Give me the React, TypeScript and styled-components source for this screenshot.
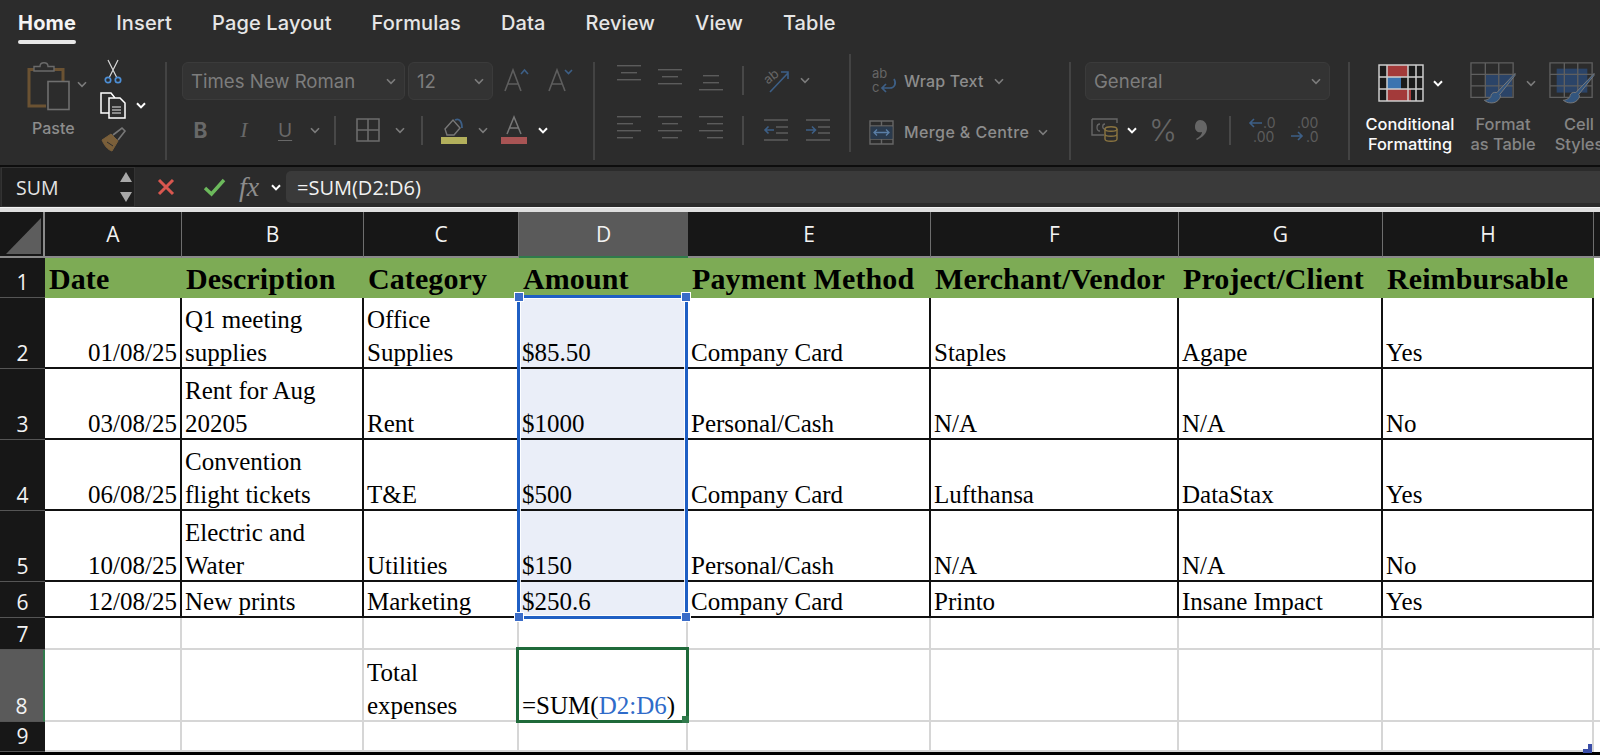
import React from "react";
import styled, { createGlobalStyle } from "styled-components";

const Global = createGlobalStyle`
  html, body { margin: 0; padding: 0; width: 1600px; height: 755px; overflow: hidden; background: #fff; }
  * { box-sizing: border-box; }
  #root { width: 1600px; height: 755px; overflow: hidden; }
`;

const UI = `Inter, "Open Sans", "Liberation Sans", sans-serif`;
const SERIF = `"Liberation Serif", "Times New Roman", serif`;

const Page = styled.div`
  width: 1600px;
  height: 755px;
  display: flex;
  flex-direction: column;
  overflow: hidden;
  background: #fff;
`;
const Chrome = styled.div`
  background: #2c2c2c;
  font-family: ${UI};
  height: 165px;
  flex: none;
`;
const TabBar = styled.div`
  height: 50px;
  display: flex;
  gap: 40px;
  padding: 11px 0 0 18px;
`;
const Tab = styled.div<{ $active?: boolean }>`
  display: flex;
  flex-direction: column;
  color: ${(p) => (p.$active ? "#f4f4f4" : "#e6e6e6")};
  font-size: 20px;
  font-weight: ${(p) => (p.$active ? 700 : 500)};
  line-height: 24px;
  letter-spacing: ${(p) => (p.$active ? 0.2 : 0.15)}px;
  white-space: nowrap;
`;
const TabLine = styled.div<{ $active?: boolean }>`
  height: 4px;
  margin-top: 5px;
  border-radius: 2px;
  background: ${(p) => (p.$active ? "#e8e8e8" : "transparent")};
`;
const Ribbon = styled.div`
  height: 115px;
  display: flex;
`;
const Group = styled.div<{ $w: number; $pad?: number; $shift?: number }>`
  width: ${(p) => p.$w}px;
  flex: none;
  padding-left: ${(p) => p.$pad ?? 0}px;
  display: flex;
  flex-direction: column;
  gap: ${(p) => 10 + (p.$shift ?? 0)}px;
  padding-top: ${(p) => 10 + (p.$shift ?? 0)}px;
`;
const Sep = styled.div<{ $top?: number; $h?: number }>`
  width: 2px;
  flex: none;
  background: #434343;
  margin-top: ${(p) => p.$top ?? 12}px;
  height: ${(p) => p.$h ?? 98}px;
`;
const Row = styled.div`
  height: 40px;
  display: flex;
  align-items: center;
`;
const Drop = styled.div<{ $w: number; $ml?: number }>`
  width: ${(p) => p.$w}px;
  margin-left: ${(p) => p.$ml ?? 0}px;
  height: 38px;
  margin-top: 2px;
  flex: none;
  border: 1px solid #3b3b3b;
  border-radius: 6px;
  background: #333333;
  color: #7d7d7d;
  font-size: 18.6px;
  display: flex;
  align-items: center;
  justify-content: space-between;
  padding: 0 8px 0 8px;
  white-space: nowrap;
`;
const Ico = styled.svg<{ $ml?: number; $mt?: number }>`
  flex: none;
  display: block;
  overflow: visible;
  margin-left: ${(p) => p.$ml ?? 0}px;
  margin-top: ${(p) => p.$mt ?? 0}px;
`;
const Glyph = styled.span<{ $ml: number; $w?: number }>`
  margin-left: ${(p) => p.$ml}px;
  width: ${(p) => p.$w ?? 14}px;
  flex: none;
  text-align: center;
  color: #686868;
  font-size: 21px;
`;
const BoldGlyph = styled(Glyph)`
  font-weight: 700;
`;
const ItalicGlyph = styled(Glyph)`
  font-family: ${SERIF};
  font-style: italic;
  font-size: 22px;
`;
const UnderGlyph = styled(Glyph)`
  font-size: 19px;
  text-decoration: underline;
  text-underline-offset: 3px;
`;
const ActionLabel = styled.span<{ $ml: number; $ls?: number }>`
  margin-left: ${(p) => p.$ml}px;
  color: #8d8d8d;
  font-size: 16px;
  font-weight: 500;
  white-space: nowrap;
  letter-spacing: ${(p) => p.$ls ?? 0.2}px;
`;
const ClipGroup = styled.div`
  width: 165px;
  flex: none;
  display: flex;
`;
const PasteCol = styled.div`
  width: 100px;
  flex: none;
  padding: 12px 0 0 27px;
`;
const PasteTop = styled.div`
  display: flex;
  align-items: center;
`;
const PasteLabel = styled.div`
  color: #8d8d8d;
  font-size: 16px;
  font-weight: 500;
  margin: 6px 0 0 5px;
`;
const SmallCol = styled.div`
  flex: none;
  display: flex;
  flex-direction: column;
  padding-top: 9px;
  gap: 9px;
`;
const SmallRow = styled.div`
  height: 25px;
  display: flex;
  align-items: center;
`;
const StyleBtn = styled.div<{ $w: number }>`
  width: ${(p) => p.$w}px;
  flex: none;
  display: flex;
  flex-direction: column;
  align-items: center;
  padding-top: 14px;
`;
const StyleIcons = styled.div<{ $shift?: number }>`
  height: 38px;
  display: flex;
  align-items: center;
  margin-left: ${(p) => p.$shift ?? 0}px;
`;
const StyleLabel = styled.div<{ $on?: boolean }>`
  margin-top: 13px;
  font-size: 16.4px;
  line-height: 19.5px;
  font-weight: 500;
  text-align: center;
  white-space: nowrap;
  color: ${(p) => (p.$on ? "#fafafa" : "#858585")};
`;
const StyleGroup = styled.div`
  display: flex;
  padding-left: 14px;
`;
const FormulaRow = styled.div`
  height: 42px;
  flex: none;
  display: flex;
  align-items: center;
  background: #2b2b2b;
  border-top: 2px solid #0d0d0d;
  font-family: ${UI};
`;
const NameBox = styled.div`
  width: 134px;
  height: 40px;
  flex: none;
  margin-left: 1px;
  background: #1e1e1e;
  border: 1px solid #333;
  color: #e4e4e4;
  font-size: 19.5px;
  font-family: "Open Sans", sans-serif;
  display: flex;
  align-items: center;
  justify-content: space-between;
  padding: 0 1px 0 14px;
`;
const Fx = styled.span`
  font-family: ${SERIF};
  font-style: italic;
  color: #8d8d8d;
  font-size: 28px;
  margin-left: 13px;
  width: 24px;
  flex: none;
`;
const FormulaInput = styled.div`
  flex: 1;
  height: 32px;
  margin-left: 5px;
  background: #3a3a3a;
  border-radius: 5px 0 0 5px;
  color: #f2f2f2;
  font-size: 20px;
  font-family: "Open Sans", sans-serif;
  display: flex;
  align-items: center;
  padding-left: 11px;
`;
const Divider = styled.div`
  height: 5px;
  flex: none;
  background: #dedede;
  border-top: 1px solid #f4f4f4;
`;
const Sheet = styled.div`
  position: relative;
  display: grid;
  grid-template-columns: 45px 137px 182px 155px 169px 243px 248px 204px 211px 6px;
  grid-template-rows: 46px 40px 71px 71px 71px 71px 36px 32px 72px 30px 3px;
  flex: none;
  background: #fff;
`;
const Corner = styled.div`
  background: #171717;
  border-right: 2px solid #8a8a8a;
  border-bottom: 2px solid #8a8a8a;
  padding: 6px 2px 2px 6px;
`;
const CornerMark = styled.svg`
  display: block;
`;
const ColHead = styled.div<{ $on?: boolean }>`
  background: ${(p) => (p.$on ? "#5a5a5a" : "#171717")};
  color: #f2f2f2;
  font-family: "Open Sans", sans-serif;
  font-size: 21px;
  font-weight: 500;
  display: flex;
  align-items: center;
  justify-content: center;
  border-right: ${(p) => (p.$on ? "none" : "1px solid #6e6e6e")};
  border-bottom: 2px solid ${(p) => (p.$on ? "#2f7a4b" : "#8a8a8a")};
`;
const ColHeadEnd = styled.div`
  background: #171717;
  border-bottom: 2px solid #8a8a8a;
`;
const RowHead = styled.div<{ $on?: boolean }>`
  background: ${(p) => (p.$on ? "#5a5a5a" : "#171717")};
  color: #f2f2f2;
  font-family: "Open Sans", sans-serif;
  font-size: 21px;
  line-height: 26px;
  font-weight: 500;
  display: flex;
  align-items: flex-end;
  justify-content: center;
  padding-bottom: 2px;
  border-right: ${(p) => (p.$on ? "2px solid #2f7a4b" : "none")};
  border-bottom: 1px solid #555;
`;
const HeadCell = styled.div`
  background: #7dab55;
  color: #000;
  font-family: ${SERIF};
  font-size: 30px;
  font-weight: 700;
  letter-spacing: 0.1px;
  line-height: 34px;
  padding: 4px 0 0 4px;
  white-space: nowrap;
  overflow: hidden;
`;
const HeadEnd = styled.div`
  background: #fff;
`;
const Cell = styled.div<{ $right?: boolean; $sel?: boolean; $plain?: boolean }>`
  font-family: ${SERIF};
  font-size: 25px;
  line-height: 33px;
  color: #000;
  background: ${(p) => (p.$sel ? "#eaeef8" : "#fff")};
  display: flex;
  flex-direction: column;
  justify-content: flex-end;
  align-items: ${(p) => (p.$right ? "flex-end" : "flex-start")};
  padding: 0 3px 0 3px;
  white-space: nowrap;
  overflow: visible;
  border-right: 2px solid ${(p) => (p.$plain ? "#d6d6d6" : "#111")};
  border-bottom: 2px solid ${(p) => (p.$plain ? "#d6d6d6" : "#111")};
  & > span:last-child {
    margin-bottom: -2px;
  }
`;
const EndCell = styled.div<{ $line?: boolean }>`
  background: #fff;
  border-bottom: 2px solid ${(p) => (p.$line ? "#d6d6d6" : "transparent")};
`;
const RefText = styled.span`
  color: #2f6bc9;
`;
const BottomBar = styled.div`
  grid-column: 1 / -1;
  background: #000;
`;
const SelectionBox = styled.div`
  position: absolute;
  left: 517px;
  top: 83px;
  width: 171px;
  height: 324px;
  border: 3px solid #1f5fc4;
  outline: 1px solid rgba(255, 255, 255, 0.9);
  outline-offset: -4px;
  pointer-events: none;
`;
const Handle = styled.div<{ $x: "left" | "right"; $y: "top" | "bottom" }>`
  position: absolute;
  ${(p) => p.$x}: -6px;
  ${(p) => p.$y}: -6px;
  width: 10px;
  height: 10px;
  background: #3a6cc8;
  border: 1px solid #fff;
`;
const ActiveBox = styled.div`
  position: absolute;
  left: 516px;
  top: 435px;
  width: 173px;
  height: 76px;
  border: 3px solid #1f6a3a;
  pointer-events: none;
`;
const ActiveHandle = styled.div`
  position: absolute;
  right: -3px;
  bottom: -3px;
  width: 7px;
  height: 7px;
  background: #2f7a4b;
`;
const ResizeGrip = styled.svg`
  position: absolute;
  left: 1583px;
  top: 532px;
`;

const Chev = ({ ml = 0, on = false, mt = 0 }: { ml?: number; on?: boolean; mt?: number }) => (
  <Ico $ml={ml} $mt={mt} width="10" height="7" viewBox="0 0 10 7">
    <path d="M1 1.2 5 5.4 9 1.2" fill="none" stroke={on ? "#fff" : "#7c7c7c"} strokeWidth={on ? 2 : 1.6} />
  </Ico>
);

const ClipboardIcon = () => (
  <Ico width="43" height="50" viewBox="0 0 43 50">
    <path d="M19 44H2V7.5h34V19" fill="none" stroke="#6b5232" strokeWidth="3" />
    <path d="M7 9V4.5h6c0-5 8-5 8 0h6V9z" fill="#2c2c2c" stroke="#6a6a6a" strokeWidth="1.4" />
    <rect x="21" y="19.5" width="21" height="28" fill="#2c2c2c" stroke="#6f6f6f" strokeWidth="1.6" />
  </Ico>
);
const ScissorsIcon = () => (
  <Ico $ml={4} width="18" height="26" viewBox="0 0 18 26">
    <path d="M4 1 12.5 18M14 1 5.5 18" stroke="#d8d8d8" strokeWidth="1.2" fill="none" />
    <circle cx="4" cy="21" r="2.7" fill="none" stroke="#4d8fd6" strokeWidth="1.7" />
    <circle cx="14" cy="21" r="2.7" fill="none" stroke="#4d8fd6" strokeWidth="1.7" />
  </Ico>
);
const CopyIcon = () => (
  <Ico width="27" height="27" viewBox="0 0 27 27">
    <path d="M11 21H1V1h10l4 5" fill="none" stroke="#fff" strokeWidth="1.5" />
    <path d="M9 6h11l5 5v15H9z" fill="#2c2c2c" stroke="#fff" strokeWidth="1.5" />
    <path d="M12 15h9M12 18h9M12 21h9" stroke="#e8e8e8" strokeWidth="1.2" />
  </Ico>
);
const BrushIcon = () => (
  <Ico width="26" height="25" viewBox="0 0 26 25">
    <path d="M2 13 11 7 18 14 12 24C8 23 4 18 2 13Z" fill="#7a5f3a" stroke="#7a5f3a" />
    <path d="M13 8 22 1l3 3-7 9" fill="none" stroke="#777" strokeWidth="1.6" />
    <path d="M7 15 13 19" stroke="#2c2c2c" strokeWidth="1" />
  </Ico>
);
const GrowA = ({ ml, down }: { ml: number; down?: boolean }) => (
  <Ico $ml={ml} width="26" height="26" viewBox="0 0 26 26">
    <path d="M2 24 10 3l8 21M5 17h10" fill="none" stroke="#5e5e5e" strokeWidth="1.6" />
    <path d={down ? "M18 3 21.5 6.5 25 3" : "M18 7 21.5 3 25 7"} fill="none" stroke="#3d5f86" strokeWidth="1.6" />
  </Ico>
);
const BorderIcon = ({ ml }: { ml: number }) => (
  <Ico $ml={ml} width="24" height="24" viewBox="0 0 24 24">
    <path d="M1 1h22v22H1zM12 1v22M1 12h22" fill="none" stroke="#6c6c6c" strokeWidth="1.6" />
  </Ico>
);
const MiniSepBar = styled.div<{ $ml: number }>`
  width: 2px;
  height: 29px;
  flex: none;
  margin-left: ${(p) => p.$ml}px;
  background: #484848;
`;
const MiniSep = ({ ml }: { ml: number }) => <MiniSepBar $ml={ml} />;
const FillIcon = ({ ml }: { ml: number }) => (
  <Ico $ml={ml} width="26" height="28" viewBox="0 0 26 28">
    <path d="M4 13 12 4l7 8-6 7H6z" fill="none" stroke="#777" strokeWidth="1.4" />
    <path d="M14 4c4-2 7 1 7 8" fill="none" stroke="#3d5f86" strokeWidth="1.8" />
    <rect x="0" y="21" width="26" height="7" fill="#b3b05c" />
  </Ico>
);
const ColorA = ({ ml }: { ml: number }) => (
  <Ico $ml={ml} width="26" height="28" viewBox="0 0 26 28">
    <path d="M6 18 13 1l7 17M8.5 12h9" fill="none" stroke="#777" strokeWidth="1.5" />
    <rect x="0" y="21" width="26" height="7" fill="#a85454" />
  </Ico>
);
const Lines = ({ ml, mt = 0, rows }: { ml: number; mt?: number; rows: [number, number][] }) => (
  <Ico $ml={ml} $mt={mt} width="24" height={rows.length * 7} viewBox={`0 0 24 ${rows.length * 7}`}>
    {rows.map(([a, b], i) => (
      <rect key={i} x={a} y={i * 7} width={b - a} height="1.4" fill="#5c5c5c" />
    ))}
  </Ico>
);
const Orient = ({ ml }: { ml: number }) => (
  <Ico $ml={ml} width="28" height="28" viewBox="0 0 28 28">
    <text x="1" y="15" transform="rotate(-38 9 10)" fontFamily={UI} fontSize="13" fill="#666">ab</text>
    <path d="M8 26 26 7M19 6h7v7" fill="none" stroke="#3d5f86" strokeWidth="1.6" />
  </Ico>
);
const IndentIcon = ({ ml, flip }: { ml: number; flip?: boolean }) => (
  <Ico $ml={ml} width="24" height="22" viewBox="0 0 24 22">
    <path d="M0 1h24M12 8h12M12 14h12M0 21h24" stroke="#5c5c5c" strokeWidth="1.4" />
    <path
      d={flip ? "M0 11h9M6 7.5 9.5 11 6 14.5" : "M1 11h9M4.5 7.5 1 11l3.5 3.5"}
      fill="none"
      stroke="#3d5f86"
      strokeWidth="1.6"
    />
  </Ico>
);
const WrapIcon = ({ ml }: { ml: number }) => (
  <Ico $ml={ml} width="25" height="26" viewBox="0 0 25 26">
    <text x="0" y="10" fontFamily={UI} fontSize="13" fill="#666">ab</text>
    <text x="0" y="24" fontFamily={UI} fontSize="13" fill="#666">c</text>
    <path d="M22 11c3 5 0 9-4 9h-8M14 16l-4 4 4 4" fill="none" stroke="#3d5f86" strokeWidth="1.7" />
  </Ico>
);
const MergeIcon = () => (
  <Ico width="25" height="25" viewBox="0 0 25 25">
    <path d="M1 1h23v23H1zM1 6h23M1 19h23M12.5 1v5M12.5 19v5" fill="none" stroke="#666" strokeWidth="1.4" />
    <rect x="1.5" y="6.5" width="22" height="12.5" fill="#2a3a4d" />
    <path d="M5 12.5h15M8 9.5l-3 3 3 3M17 9.5l3 3-3 3" fill="none" stroke="#5a7ea6" strokeWidth="1.3" />
  </Ico>
);
const CurrencyIcon = () => (
  <Ico $ml={6} width="27" height="25" viewBox="0 0 27 25">
    <path d="M1 1h25v4M1 1v16h12" fill="none" stroke="#666" strokeWidth="1.4" />
    <path d="M9 6c-4 0-4 7 0 7M14 6c-3 0-3 5 0 5" fill="none" stroke="#666" strokeWidth="1.3" />
    <ellipse cx="20" cy="11" rx="6" ry="2.3" fill="#2c2c2c" stroke="#8a7440" strokeWidth="1.4" />
    <path d="M14 11v10c0 3 12 3 12 0V11M14 16c0 3 12 3 12 0" fill="none" stroke="#8a7440" strokeWidth="1.4" />
  </Ico>
);
const Percent = styled.span`
  color: #666;
  font-size: 30px;
  font-weight: 300;
  margin-left: 12px;
  width: 27px;
  flex: none;
`;
const CommaIcon = () => (
  <Ico $ml={18} width="13" height="20" viewBox="0 0 13 20">
    <path d="M6 0c4 0 7 3 7 8 0 5-4 9-10 12l-1-1c4-2 6-5 6-7-4 1-7-1-7-5 0-4 2-7 5-7z" fill="#666" />
  </Ico>
);
const DecIcon = ({ ml, more }: { ml: number; more?: boolean }) => (
  <Ico $ml={ml} width="27" height="28" viewBox="0 0 27 28">
    {more ? (
      <>
        <text x="7" y="12" fontFamily={UI} fontSize="14" fill="#5c5c5c">.00</text>
        <text x="16" y="26" fontFamily={UI} fontSize="14" fill="#5c5c5c">.0</text>
        <path d="M1 20h11M8 16l4 4-4 4" fill="none" stroke="#3d5f86" strokeWidth="1.6" />
      </>
    ) : (
      <>
        <text x="14" y="12" fontFamily={UI} fontSize="14" fill="#5c5c5c">.0</text>
        <text x="4" y="26" fontFamily={UI} fontSize="14" fill="#5c5c5c">.00</text>
        <path d="M1 7h12M5 3 1 7l4 4" fill="none" stroke="#3d5f86" strokeWidth="1.6" />
      </>
    )}
  </Ico>
);
const CondIcon = () => (
  <Ico width="46" height="38" viewBox="0 0 46 38">
    <rect width="46" height="38" fill="#1b1b1b" />
    <rect x="9" y="1" width="21" height="12" fill="#a33a3a" />
    <rect x="9" y="13" width="14" height="12" fill="#3b74b0" />
    <rect x="9" y="25" width="24" height="12" fill="#a33a3a" />
    <path d="M1 1h44v36H1zM1 13h44M1 25h44M9 1v36M30 1v36M38 1v36" fill="none" stroke="#cfcfcf" strokeWidth="1.5" />
  </Ico>
);
const TableBrush = ({ w = 46, full }: { w?: number; full?: boolean }) => (
  <Ico width={w} height="45" viewBox="0 0 48 45">
    <rect x={full ? 8 : 16} y={full ? 7 : 13} width={full ? 32 : 28} height={full ? 25 : 24} fill="#2b4468" />
    <path d="M1 1h44v36H1zM1 13h44M1 25h44M16 1v36M30 1v36" fill="none" stroke="#5f5f5f" strokeWidth="1.4" />
    <path d="M47 12 28 32c-3-1-6 1-6 3 0 3-5 5-7 5 3 3 12 5 16-2 1-2 1-3 0-4L47 14z" fill="#33567f" stroke="#7a7a7a" strokeWidth="1" />
  </Ico>
);
const StepArrows = () => (
  <Ico width="14" height="32" viewBox="0 0 14 32">
    <path d="M7 1 13 11H1z" fill="#a8a8a8" />
    <path d="M7 31 13 21H1z" fill="#a8a8a8" />
  </Ico>
);
const CrossIcon = () => (
  <Ico $ml={22} width="18" height="18" viewBox="0 0 18 18">
    <path d="M2 2 16 16M16 2 2 16" stroke="#d9574f" strokeWidth="3" />
  </Ico>
);
const CheckIcon = () => (
  <Ico $ml={28} width="23" height="18" viewBox="0 0 23 18">
    <path d="M2 10 8.5 16 21 2" fill="none" stroke="#6cb95c" strokeWidth="3.4" />
  </Ico>
);

const columns = ["A", "B", "C", "D", "E", "F", "G", "H"];
const headers = ["Date", "Description", "Category", "Amount", "Payment Method", "Merchant/Vendor", "Project/Client", "Reimbursable"];
const rows: string[][][] = [
  [["01/08/25"], ["Q1 meeting", "supplies"], ["Office", "Supplies"], ["$85.50"], ["Company Card"], ["Staples"], ["Agape"], ["Yes"]],
  [["03/08/25"], ["Rent for Aug", "20205"], ["Rent"], ["$1000"], ["Personal/Cash"], ["N/A"], ["N/A"], ["No"]],
  [["06/08/25"], ["Convention", "flight tickets"], ["T&E"], ["$500"], ["Company Card"], ["Lufthansa"], ["DataStax"], ["Yes"]],
  [["10/08/25"], ["Electric and", "Water"], ["Utilities"], ["$150"], ["Personal/Cash"], ["N/A"], ["N/A"], ["No"]],
  [["12/08/25"], ["New prints"], ["Marketing"], ["$250.6"], ["Company Card"], ["Printo"], ["Insane Impact"], ["Yes"]],
];
const blank = Array.from({ length: 8 });

export default function App() {
  return (
    <Page>
      <Global />
      <Chrome>
        <TabBar>
          {["Home", "Insert", "Page Layout", "Formulas", "Data", "Review", "View", "Table"].map((t, i) => (
            <Tab key={t} $active={i === 0}>
              {t}
              <TabLine $active={i === 0} />
            </Tab>
          ))}
        </TabBar>
        <Ribbon>
          <ClipGroup>
            <PasteCol>
              <PasteTop>
                <ClipboardIcon />
                <Chev ml={7} mt={-6} />
              </PasteTop>
              <PasteLabel>Paste</PasteLabel>
            </PasteCol>
            <SmallCol>
              <SmallRow><ScissorsIcon /></SmallRow>
              <SmallRow><CopyIcon /><Chev ml={9} on /></SmallRow>
              <SmallRow><BrushIcon /></SmallRow>
            </SmallCol>
          </ClipGroup>
          <Sep />
          <Group $w={426} $pad={15}>
            <Row>
              <Drop $w={223}>Times New Roman<Chev /></Drop>
              <Drop $w={85} $ml={3}>12<Chev /></Drop>
              <GrowA ml={10} />
              <GrowA ml={18} down />
            </Row>
            <Row>
              <BoldGlyph $ml={11} $w={15}>B</BoldGlyph>
              <ItalicGlyph $ml={29}>I</ItalicGlyph>
              <UnderGlyph $ml={27}>U</UnderGlyph>
              <Chev ml={18} />
              <MiniSep ml={14} />
              <BorderIcon ml={20} />
              <Chev ml={15} />
              <MiniSep ml={16} />
              <FillIcon ml={18} />
              <Chev ml={11} />
              <ColorA ml={13} />
              <Chev ml={11} on />
            </Row>
          </Group>
          <Sep />
          <Group $w={254} $pad={22}>
            <Row>
              <Lines ml={0} mt={-10} rows={[[0, 24], [4, 20], [0, 24]]} />
              <Lines ml={17} mt={-2} rows={[[0, 24], [4, 20], [0, 24]]} />
              <Lines ml={17} mt={10} rows={[[4, 20], [4, 20], [0, 24]]} />
              <MiniSep ml={19} />
              <Orient ml={18} />
              <Chev ml={10} />
            </Row>
            <Row>
              <Lines ml={0} rows={[[0, 24], [0, 16], [0, 24], [0, 16]]} />
              <Lines ml={17} rows={[[0, 24], [4, 20], [0, 24], [4, 20]]} />
              <Lines ml={17} rows={[[0, 24], [8, 24], [0, 24], [8, 24]]} />
              <MiniSep ml={19} />
              <IndentIcon ml={20} />
              <IndentIcon ml={18} flip />
            </Row>
          </Group>
          <Sep $top={4} />
          <Group $w={218} $pad={18} $shift={1}>
            <Row>
              <WrapIcon ml={3} />
              <ActionLabel $ml={7}>Wrap Text</ActionLabel>
              <Chev ml={10} />
            </Row>
            <Row>
              <MergeIcon />
              <ActionLabel $ml={10} $ls={0.4}>Merge &amp; Centre</ActionLabel>
              <Chev ml={9} />
            </Row>
          </Group>
          <Sep />
          <Group $w={277} $pad={14}>
            <Row>
              <Drop $w={245}>General<Chev /></Drop>
            </Row>
            <Row>
              <CurrencyIcon />
              <Chev ml={9} on />
              <Percent>%</Percent>
              <CommaIcon />
              <MiniSep ml={22} />
              <DecIcon ml={18} />
              <DecIcon ml={14} more />
            </Row>
          </Group>
          <Sep />
          <StyleGroup>
            <StyleBtn $w={92}>
              <StyleIcons><CondIcon /><Chev ml={9} on /></StyleIcons>
              <StyleLabel $on>Conditional<br />Formatting</StyleLabel>
            </StyleBtn>
            <StyleBtn $w={94}>
              <StyleIcons><TableBrush /><Chev ml={10} /></StyleIcons>
              <StyleLabel>Format<br />as Table</StyleLabel>
            </StyleBtn>
            <StyleBtn $w={58}>
              <StyleIcons $shift={-14}><TableBrush full /></StyleIcons>
              <StyleLabel>Cell<br />Styles</StyleLabel>
            </StyleBtn>
          </StyleGroup>
        </Ribbon>
      </Chrome>
      <FormulaRow>
        <NameBox>SUM<StepArrows /></NameBox>
        <CrossIcon />
        <CheckIcon />
        <Fx>fx</Fx>
        <Chev ml={8} on />
        <FormulaInput>=SUM(D2:D6)</FormulaInput>
      </FormulaRow>
      <Divider />
      <Sheet>
        <Corner>
          <CornerMark width="35" height="36" viewBox="0 0 35 36">
            <path d="M35 0V36H0Z" fill="#5d5d5d" />
          </CornerMark>
        </Corner>
        {columns.map((c) => (
          <ColHead key={c} $on={c === "D"}>{c}</ColHead>
        ))}
        <ColHeadEnd />
        <RowHead>1</RowHead>
        {headers.map((h) => (
          <HeadCell key={h}>{h}</HeadCell>
        ))}
        <HeadEnd />
        {rows.map((r, i) => (
          <React.Fragment key={i}>
            <RowHead>{i + 2}</RowHead>
            {r.map((lines, j) => (
              <Cell key={j} $right={j === 0} $sel={j === 3}>
                {lines.map((l) => (
                  <span key={l}>{l}</span>
                ))}
              </Cell>
            ))}
            <EndCell />
          </React.Fragment>
        ))}
        <RowHead>7</RowHead>
        {blank.map((_, j) => <Cell key={j} $plain />)}
        <EndCell $line />
        <RowHead $on>8</RowHead>
        <Cell $plain />
        <Cell $plain />
        <Cell $plain><span>Total</span><span>expenses</span></Cell>
        <Cell $plain><span>=SUM(<RefText>D2:D6</RefText>)</span></Cell>
        <Cell $plain />
        <Cell $plain />
        <Cell $plain />
        <Cell $plain />
        <EndCell $line />
        <RowHead>9</RowHead>
        {blank.map((_, j) => <Cell key={j} $plain />)}
        <EndCell />
        <BottomBar />
        <SelectionBox>
          <Handle $x="left" $y="top" />
          <Handle $x="right" $y="top" />
          <Handle $x="left" $y="bottom" />
          <Handle $x="right" $y="bottom" />
        </SelectionBox>
        <ActiveBox><ActiveHandle /></ActiveBox>
        <ResizeGrip width="9" height="9" viewBox="0 0 9 9">
          <path d="M5 0h4v9H0V5h5z" fill="#3b4ea8" />
        </ResizeGrip>
      </Sheet>
    </Page>
  );
}
